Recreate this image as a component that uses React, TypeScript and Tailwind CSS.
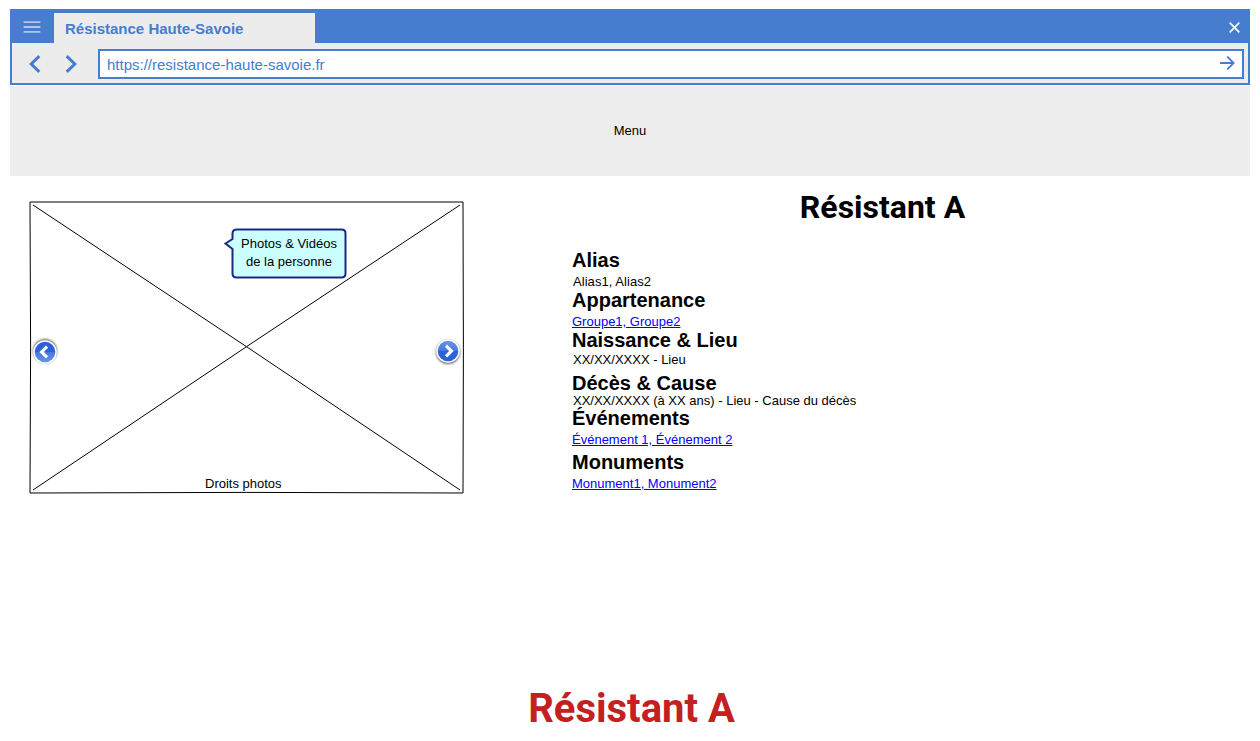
type Section = {
  title: string;
  text: string;
  link?: boolean;
  titleClass: string;
  textClass: string;
};

const sections: Section[] = [
  { title: 'Alias', text: 'Alias1, Alias2', titleClass: '', textClass: 'mt-1 tracking-[0.05px]' },
  { title: 'Appartenance', text: 'Groupe1, Groupe2', link: true, titleClass: 'mt-px', textClass: 'mt-1' },
  { title: 'Naissance & Lieu', text: 'XX/XX/XXXX - Lieu', titleClass: 'mt-px', textClass: 'mt-0.5' },
  { title: 'Décès & Cause', text: 'XX/XX/XXXX (à XX ans) - Lieu - Cause du décès', titleClass: 'mt-1.5', textClass: '' },
  { title: 'Événements', text: 'Événement 1, Événement 2', link: true, titleClass: '', textClass: 'mt-1' },
  { title: 'Monuments', text: 'Monument1, Monument2', link: true, titleClass: 'mt-[5px]', textClass: 'mt-1' },
];

function BrowserBar() {
  return (
    <div className="h-[76px] border-2 border-[#467dcf] bg-[#ececec] text-[#467dcf]">
      <div className="flex h-8 items-end bg-[#467dcf]">
        <div className="flex h-8 w-[42px] items-center pl-[11px]">
          <svg width="18" height="14" viewBox="0 0 18 14" stroke="#b0c7ea" strokeWidth="1.8">
            <path d="M.6 2.200H17.400M.6 7H17.400M.6 11.800H17.400" />
          </svg>
        </div>
        <div className="flex h-[30px] w-[261px] items-center bg-[#ececec] pt-0.5 pl-[11px] text-[15px] leading-[18px] font-bold">
          Résistance Haute-Savoie
        </div>
        <div className="ml-auto flex h-8 items-center pr-2">
          <svg width="11" height="11" viewBox="0 0 11 11" stroke="#fff" strokeWidth="1.7">
            <path d="M.7 .7L10.3 10.3M10.3 .7L.7 10.3" />
          </svg>
        </div>
      </div>
      <div className="flex h-10 items-center pt-0.5 pr-1">
        <svg className="ml-[17px]" width="12" height="18" viewBox="0 0 12 18" fill="none" stroke="#467dcf" strokeWidth="3">
          <path d="M10.3 1.1L2.2 9L10.3 16.9" />
        </svg>
        <svg className="ml-6" width="12" height="18" viewBox="0 0 12 18" fill="none" stroke="#467dcf" strokeWidth="3">
          <path d="M1.7 1.1L9.8 9L1.7 16.9" />
        </svg>
        <div className="ml-[21px] flex h-[30px] flex-1 items-center justify-between border-2 border-[#467dcf] bg-white pr-[7px] pl-[7px] text-[15px] leading-[18px]">
          <span className="pt-0.5">https://resistance-haute-savoie.fr</span>
          <svg className="-mt-0.5" width="15" height="14" viewBox="0 0 15 14" fill="none" stroke="#467dcf" strokeWidth="1.8">
            <path d="M0 7H14M7.2 .6L13.7 7L7.2 13.4" />
          </svg>
        </div>
      </div>
    </div>
  );
}

function ArrowButton({ next = false }: { next?: boolean }) {
  const id = next ? 'next-fill' : 'prev-fill';
  return (
    <svg width="32" height="32" viewBox="0 0 32 32" fill="none">
      <defs>
        <linearGradient id={id} x1="0" y1="0" x2="0" y2="1">
          <stop offset="0" stopColor={next ? '#6b95e7' : '#2c62d8'} />
          <stop offset=".48" stopColor={next ? '#4577df' : '#2c62d8'} />
          <stop offset=".52" stopColor={next ? '#2c62d8' : '#4577df'} />
          <stop offset="1" stopColor={next ? '#2c62d8' : '#6b95e7'} />
        </linearGradient>
        <filter id={id + '-shadow'} x="-50%" y="-50%" width="200%" height="200%">
          <feGaussianBlur stdDeviation="1.2" />
        </filter>
      </defs>
      <circle cx="16" cy={next ? 17 : 15} r="12" fill="#000" opacity=".6" filter={`url(#${id}-shadow)`} />
      <circle cx="16" cy="16" r="11.8" fill="#fff" />
      <circle cx="16" cy="16" r="10.3" fill={`url(#${id})`} />
      <path
        d={next ? 'M14 10.6L19.4 16L14 21.4' : 'M18 10.6L12.6 16L18 21.4'}
        stroke="#fff"
        strokeWidth="3.2"
      />
    </svg>
  );
}

function PhotoFrame() {
  return (
    <div className="relative mt-[25px] ml-[19px] h-[293px] w-[435px]">
      <svg className="absolute inset-0" width="435" height="293" viewBox="0 0 435 293" fill="none" stroke="#000">
        <path d="M1 1Q217 1 434 1Q434.800 146 434 292Q217 290.800 1 292Q2.200 146 1 1Z" />
        <path d="M4 4Q217 144.500 431 289M431 4Q218 144.500 4 289" />
      </svg>
      <div className="absolute top-[135px] left-0">
        <ArrowButton />
      </div>
      <div className="absolute top-[133.5px] left-[403px]">
        <ArrowButton next />
      </div>
      <div className="absolute top-[26px] left-[194px] h-[52px] w-[125px]">
        <svg className="absolute inset-0" width="125" height="52" viewBox="0 0 125 52">
          <path
            d="M14 2.5H118.500Q122.500 2.500 122.500 6.500V46.500Q122.500 50.500 118.500 50.500H13.500Q9.500 50.500 9.500 46.500V22L2.500 16.500L9.500 12V6.500Q9.500 2.500 14 2.500Z"
            fill="#ccffff"
            stroke="#1a2a80"
            strokeWidth="2"
          />
        </svg>
        <div className="relative pt-2 pl-[7px] text-center text-[13px] leading-[18px]">
          Photos &amp; Vidéos
          <br />
          de la personne
        </div>
      </div>
      <div className="absolute top-[275px] left-[176px] text-[13px] leading-[15px]">Droits photos</div>
    </div>
  );
}

export default function App() {
  return (
    <div className="h-[741px] w-[1260px] overflow-hidden bg-white px-2.5 pt-[9px] font-['Liberation_Sans',Arial,sans-serif] text-black">
      <BrowserBar />
      <nav className="mt-px flex h-[90px] items-center justify-center bg-[#ededed] pb-0.5 text-[13px] leading-[15px]">Menu</nav>
      <main className="flex h-[500px]">
        <PhotoFrame />
        <section className="ml-[108px] w-[621px]">
          <h1 className="mt-3 text-center font-[Roboto,sans-serif] text-[32px] leading-[38px] font-bold">Résistant A</h1>
          <div className="mt-6">
            {sections.map((s) => (
              <div key={s.title} className="flex flex-col items-start">
                <h2 className={`text-[20px] leading-5 font-bold ${s.titleClass}`}>{s.title}</h2>
                {s.link ? (
                  <a href="#" className={`text-[13px] leading-[15px] text-[#0000ff] underline ${s.textClass}`}>{s.text}</a>
                ) : (
                  <p className={`pl-px text-[13px] leading-[15px] ${s.textClass}`}>{s.text}</p>
                )}
              </div>
            ))}
          </div>
        </section>
      </main>
      <footer className="mt-[9px] pl-[3px] text-center font-[Roboto,sans-serif] text-[40px] leading-[48px] font-bold text-[#c42022]">
        Résistant A
      </footer>
    </div>
  );
}
